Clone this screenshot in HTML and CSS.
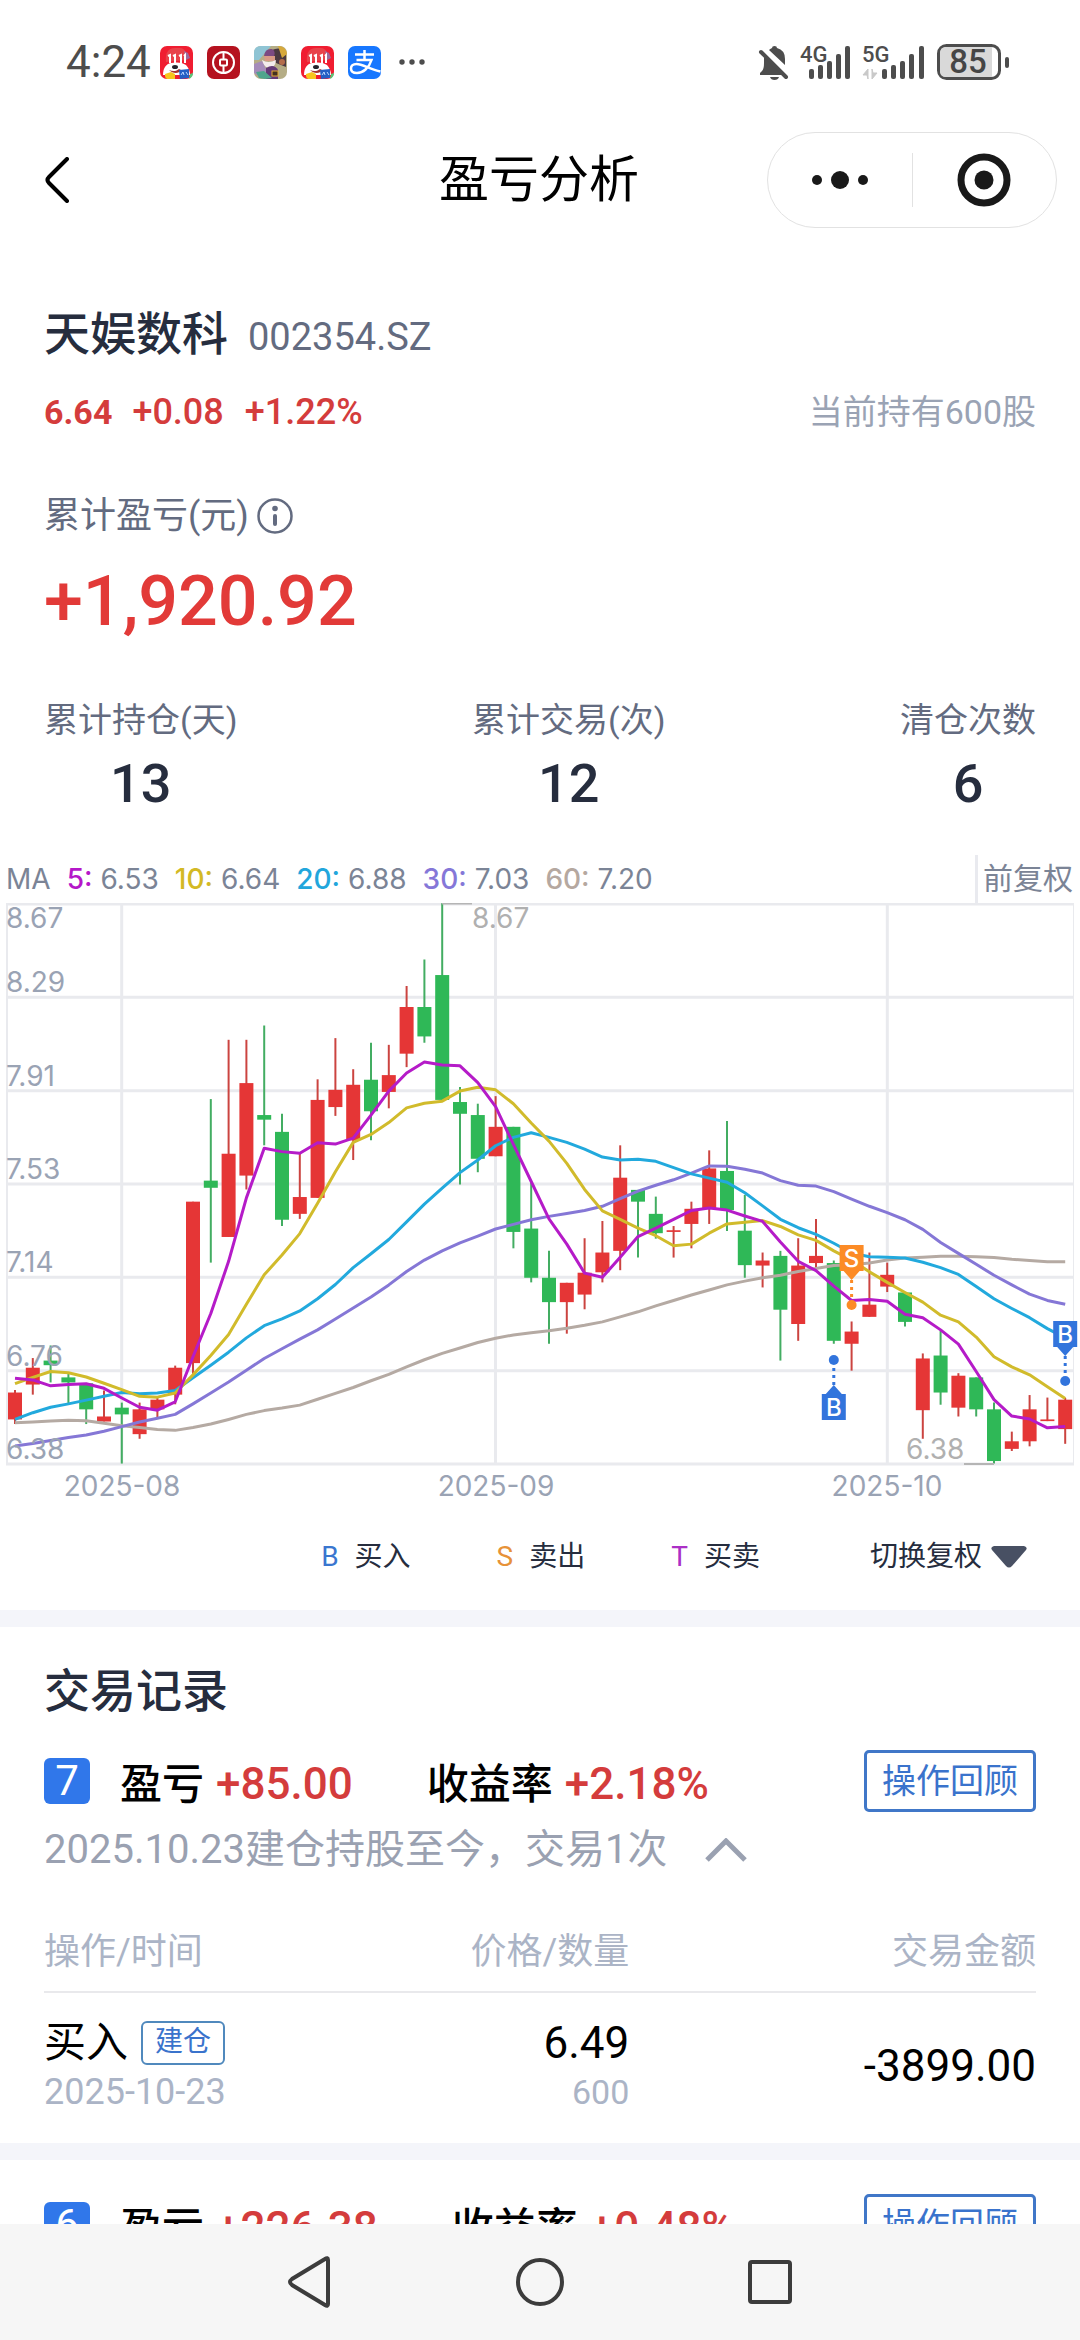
FILE: index.html
```html
<!DOCTYPE html>
<html lang="zh-CN">
<head>
<meta charset="utf-8">
<meta name="viewport" content="width=device-width, initial-scale=1">
<title>盈亏分析</title>
<link rel="stylesheet" href="styles.css">
</head>
<body>
<svg class="defs" aria-hidden="true">
  <symbol id="sale-app" viewBox="0 0 33 33">
    <rect width="33" height="33" rx="7" fill="#f01d31"/>
    <path d="M6 16C5 7 8 2 15 2h5c5 0 7 5 7 12z" fill="#e8434b"/>
    <path d="M24 5l4 2 2 5-4 2z" fill="#9c6a9c"/>
    <path d="M8 10l2-1v8M13 10l2-1v8M19 10l2-1v8M24 10l1-1v8" stroke="#fff" stroke-width="2" fill="none"/>
    <path d="M3 29c0-7 3-11 8-12 5-1 11-1 15 2 3 3 4 7 4 10z" fill="#fff"/>
    <path d="M9 24c4 2 8 1 10-1l2 1c-2 4-8 4-12 0z" fill="#a8322d"/>
    <ellipse cx="15" cy="21" rx="3" ry="2" fill="#26242d"/>
    <path d="M5 28l6-2 4 2v5H7q-2-1-2-3z" fill="#f8c51c"/>
    <path d="M19 24l10-1v9l-9 1z" fill="#245fc4"/>
    <path d="M21 29l2-3 1 3m2-3l2 3" stroke="#bcd9ff" fill="none"/>
    <path d="M30 28l3-1q0 4-4 6z" fill="#58c678"/>
  </symbol>
</svg>
<div class="app">
  <div class="status">
    <div class="status-side">
      <span class="clock">4:24</span>
      <div class="app-icons">
        <svg class="app-icon" viewBox="0 0 33 33"><use href="#sale-app"/></svg>
        <svg class="app-icon" viewBox="0 0 33 33"><rect width="33" height="33" rx="7" fill="#b5121f"/><circle cx="16.500" cy="16.500" r="10.500" fill="none" stroke="#fff" stroke-width="2"/><rect x="13" y="13.500" width="7" height="6" rx="1" fill="none" stroke="#fff" stroke-width="2"/><path d="M16.500 6v7M16.500 20v7" stroke="#fff" stroke-width="2"/></svg>
        <svg class="app-icon" viewBox="0 0 33 33"><rect width="33" height="33" rx="7" fill="#b5ad86"/><path d="M0 7q0-7 7-7h10L5 14H0z" fill="#8fc4d4"/><path d="M18 4q8-4 14 2v15l-10-4z" fill="#4b3940"/><path d="M24 0q8 0 9 8l-5 4z" fill="#d6a93c"/><path d="M10 10q1-8 8-7 4 2 2 8z" fill="#7c4a82"/><path d="M10 10h11v5H11z" fill="#d99a86"/><path d="M8 14q6 4 14 0-1 9-8 8-5-2-6-8z" fill="#f3ecec"/><path d="M0 18l8-3 5 10-7 6-6-4z" fill="#a58cba"/><path d="M12 22q8-5 12 2v9H12z" fill="#643a76"/><path d="M2 26l8-1 8 7-7 1-6-1z" fill="#4fa58d"/><rect x="18" y="25" width="6" height="5" fill="#44301f" stroke="#e5aa33"/><circle cx="28" cy="16" r="3" fill="#b46d4b"/></svg>
        <svg class="app-icon" viewBox="0 0 33 33"><use href="#sale-app"/></svg>
        <svg class="app-icon" viewBox="0 0 33 33"><rect width="33" height="33" rx="7" fill="#1777ff"/><path d="M7 8.500h19M16.500 4v10M8.500 14h15C21 22 15 27 9 27c-4 0-6-2-6-4.500 0-2.500 2-4.500 5.500-4.500 6 0 13 5 24 7.500" fill="none" stroke="#fff" stroke-width="2.500"/></svg>
      </div>
      <svg class="more" viewBox="0 0 26 6"><circle cx="3" cy="3" r="2.700"/><circle cx="13" cy="3" r="2.700"/><circle cx="23" cy="3" r="2.700"/></svg>
    </div>
    <svg class="status-icons" viewBox="0 0 252 36">
      <g fill="#4d4d4d">
        <path d="M11 6q1-1 3-2 0-2 2.500-2T19 4q8 2 8 11v6z"/>
        <path d="M6 12l19 19H2v-2l2-2q2-2 2-8z"/>
        <path d="M3 8l25 25" stroke="#4d4d4d" stroke-width="4" stroke-linecap="round"/>
        <path d="M12 33h9q-1 3-4.500 3T12 33z"/>
        <rect x="51" y="25" width="5" height="10" rx="2"/><rect x="60" y="21" width="5" height="14" rx="2"/><rect x="69" y="17" width="5" height="18" rx="2"/><rect x="78" y="10" width="5" height="25" rx="2"/><rect x="87" y="2" width="5" height="33" rx="2"/>
        <rect x="124" y="25" width="5" height="10" rx="2"/><rect x="133" y="21" width="5" height="14" rx="2"/><rect x="142" y="17" width="5" height="18" rx="2"/><rect x="151" y="10" width="5" height="25" rx="2"/><rect x="161" y="2" width="5" height="33" rx="2"/>
        <rect x="247" y="13" width="4" height="11" rx="2"/>
      </g>
      <path d="M110 35V25l-5 6h4zM114 25v10l5-6h-4z" fill="#c9c9c9" stroke="#c9c9c9"/>
      <text x="42" y="18" class="net">4G</text><text x="104" y="18" class="net">5G</text>
      <rect x="180.500" y="1.500" width="61" height="33" rx="8" fill="#fff" stroke="#4d4d4d" stroke-width="3"/>
      <path d="M188 3h46v30h-46q-6 0-6-6V9q0-6 6-6z" fill="#d9d9d9"/>
      <text x="210" y="29" class="battery">85</text>
    </svg>
  </div>
  <header class="bar">
    <button class="back" aria-label="返回"><svg viewBox="0 0 24 46"><path d="M22 2L4 20q-3 3 0 6l18 18"/></svg></button>
    <h1>盈亏分析</h1>
    <div class="capsule">
      <button aria-label="更多"><svg viewBox="0 0 56 56"><circle cx="5" cy="28" r="5"/><circle cx="28" cy="28" r="9"/><circle cx="51" cy="28" r="5"/></svg></button>
      <button aria-label="关闭"><svg viewBox="0 0 56 56"><circle cx="28" cy="28" r="23" fill="none" stroke="#191919" stroke-width="7"/><circle cx="28" cy="28" r="9.500"/></svg></button>
    </div>
  </header>
  <main>
    <section class="summary">
      <div class="stock"><h2>天娱数科</h2><span class="code">002354.SZ</span></div>
      <div class="quote">
        <span class="price">6.64</span><span class="change">+0.08</span><span class="rate">+1.22%</span>
        <span class="holding">当前持有600股</span>
      </div>
      <div class="total-label">累计盈亏(元)<button class="info" aria-label="说明"><svg viewBox="0 0 36 36"><circle cx="18" cy="18" r="16.500" fill="none" stroke="#636b80" stroke-width="2.500"/><circle cx="18" cy="10.500" r="2.800"/><rect x="16" y="16" width="4" height="12" rx="2"/></svg></button></div>
      <div class="total">+1,920.92</div>
      <dl class="stats">
        <div><dt>累计持仓(天)</dt><dd>13</dd></div>
        <div><dt>累计交易(次)</dt><dd>12</dd></div>
        <div><dt>清仓次数</dt><dd>6</dd></div>
      </dl>
    </section>
    <section class="chart">
      <div class="ma">
        <span>MA</span>
        <span class="ma-item"><b class="ma5">5:</b>6.53</span>
        <span class="ma-item"><b class="ma10">10:</b>6.64</span>
        <span class="ma-item"><b class="ma20">20:</b>6.88</span>
        <span class="ma-item"><b class="ma30">30:</b>7.03</span>
        <span class="ma-item"><b class="ma60">60:</b>7.20</span>
        <span class="adjust">前复权</span>
      </div>
      <svg id="kline" class="kline" viewBox="0 0 1080 600" role="img" aria-label="K线图"></svg>
      <div class="legend">
        <span><i class="buy">B</i>买入</span>
        <span><i class="sell">S</i>卖出</span>
        <span><i class="both">T</i>买卖</span>
        <button class="switch">切换复权<svg viewBox="0 0 36 22"><path d="M3 0h30q4 1 2 4L21 20q-3 3-6 0L1 4Q-1 1 3 0z"/></svg></button>
      </div>
    </section>
    <section class="records">
      <h2>交易记录</h2>
      <div class="record">
        <div class="record-head">
          <span class="num">7</span>
          <span class="pair">盈亏<em>+85.00</em></span>
          <span class="pair">收益率<em>+2.18%</em></span>
          <button class="review">操作回顾</button>
        </div>
        <div class="note">2025.10.23建仓持股至今，交易1次<button class="fold" aria-label="收起"><svg viewBox="0 0 42 24"><path d="M2 22L21 3l19 19"/></svg></button></div>
        <table>
          <colgroup><col class="c1"><col class="c2"><col></colgroup>
          <thead><tr><th>操作/时间</th><th>价格/数量</th><th>交易金额</th></tr></thead>
          <tbody><tr>
            <td><div class="main-line">买入<span class="tag">建仓</span></div><div class="sub-line date">2025-10-23</div></td>
            <td><div class="main-line fig">6.49</div><div class="sub-line">600</div></td>
            <td class="fig">-3899.00</td>
          </tr></tbody>
        </table>
      </div>
    </section>
    <section class="records">
      <div class="record">
        <div class="record-head">
          <span class="num">6</span>
          <span class="pair">盈亏<em>+226.38</em></span>
          <span class="pair">收益率<em>+0.48%</em></span>
          <button class="review">操作回顾</button>
        </div>
      </div>
    </section>
  </main>
  <nav class="system">
    <button aria-label="返回"><svg viewBox="0 0 48 52"><path d="M42 4v44q0 3-3 1L6 29q-4-3 0-6L39 3q3-2 3 1z"/></svg></button>
    <button aria-label="主页"><svg viewBox="0 0 48 52"><circle cx="24" cy="26" r="22"/></svg></button>
    <button aria-label="最近任务"><svg viewBox="0 0 48 52"><rect x="4" y="6" width="40" height="40" rx="2"/></svg></button>
  </nav>
</div>
<script src="chart.js"></script>
</body>
</html>
```
FILE: styles.css
```css
* { box-sizing: border-box; margin: 0; padding: 0; }
body { background: #fff; color: #262d3e; font-family: Roboto, "Noto Sans CJK SC", sans-serif; }
button { font: inherit; color: inherit; background: none; border: 0; cursor: pointer; }
svg { display: block; }
em, i { font-style: normal; }
.defs { display: none; }
.app { height: 100vh; display: flex; flex-direction: column; overflow: hidden; }

.status { display: flex; flex-shrink: 0; justify-content: space-between; align-items: center; height: 100px; padding: 24px 70px 0 66px; }
.status-side { display: flex; align-items: center; }
.clock { font-size: 44px; line-height: 48px; color: #4d4d4d; width: 94px; }
.app-icons { display: flex; gap: 14px; }
.app-icon { width: 33px; height: 33px; }
.more { width: 26px; margin-left: 18px; fill: #4d4d4d; }
.status-icons { width: 252px; height: 36px; overflow: visible; }
.net { font: 500 22px Roboto, sans-serif; fill: #4d4d4d; }
.battery { font: 500 33px Roboto, sans-serif; fill: #454545; text-anchor: middle; }

.bar { display: grid; grid-template-columns: 394px 1fr auto; flex-shrink: 0; align-items: center; height: 160px; padding: 0 23px 0 45px; color: #000; }
.bar h1 { font-size: 50px; line-height: 60px; font-weight: 400; }
.back { justify-self: start; }
.back svg { width: 24px; height: 46px; fill: none; stroke: #000; stroke-width: 4; stroke-linecap: round; }
.capsule { display: flex; width: 290px; height: 96px; padding: 20px 0; border: 1px solid #e2e2e2; border-radius: 48px; }
.capsule button { flex: 1; display: flex; align-items: center; justify-content: center; }
.capsule button + button { border-left: 1px solid #e2e2e2; }
.capsule svg { width: 56px; fill: #191919; }

main { flex: 1; overflow-y: auto; scrollbar-width: none; }
.summary { padding: 42px 44px 41px; }
.stock { display: flex; align-items: baseline; gap: 20px; line-height: 64px; }
h2 { font-size: 46px; font-weight: 500; }
.code { font-size: 38px; color: #636b80; }
.quote { display: flex; align-items: center; margin-top: 21px; font-size: 36px; line-height: 44px; font-weight: 500; color: #d43c3c; }
.price { font-size: 34px; font-weight: 700; }
.change { margin-left: 20px; }
.rate { margin-left: 21px; }
.holding { margin-left: auto; font-size: 34px; font-weight: 400; color: #9aa3b4; }
.total-label { display: flex; align-items: center; gap: 8px; margin-top: 60px; font-size: 36px; line-height: 44px; color: #636b80; }
.info svg { width: 36px; fill: #636b80; }
.total { margin-top: 21px; font-size: 70px; line-height: 84px; font-weight: 500; color: #e23a38; }
.stats { display: flex; justify-content: space-between; margin-top: 55px; text-align: center; }
.stats dt { font-size: 34px; line-height: 44px; color: #636b80; }
.stats dd { margin-top: 12px; font-size: 54px; line-height: 60px; font-weight: 500; }

.ma { display: flex; align-items: center; height: 48px; padding: 0 7px 0 6px; font-family: Inter, "Noto Sans CJK SC", sans-serif; font-size: 28px; color: #7b8496; gap: 16px; }
.ma-item { display: flex; gap: 8px; }
.ma-item b { font-weight: 500; }
.ma5 { color: #b517c9; }
.ma10 { color: #d3b925; }
.ma20 { color: #22a6dc; }
.ma30 { color: #8577d8; }
.ma60 { color: #b5a8a0; }
.adjust { align-self: stretch; margin-left: auto; padding-left: 5px; border-left: 3px solid #e9eaef; font-size: 30px; line-height: 46px; }
.kline { width: 100%; height: auto; }
.kline text { font: 28px Inter, sans-serif; fill: #9aa3b4; }
.kline .extreme { fill: #b0b0b0; }
.kline .mark { font: 500 24px Inter, sans-serif; fill: #fff; text-anchor: middle; }
.kline .month { text-anchor: middle; }
.legend { display: flex; justify-content: flex-end; align-items: center; height: 107px; padding-right: 53px; font-size: 28px; line-height: 40px; }
.legend span { margin-right: 86px; }
.legend i { margin-right: 16px; }
.legend span:nth-child(3) { margin-right: 110px; }
.buy { color: #3a76cf; }
.sell { color: #e79238; }
.both { color: #ab2fc6; }
.switch { display: flex; align-items: center; gap: 9px; }
.switch svg { width: 36px; fill: #485063; }

.records { border-top: 17px solid #f4f5fa; padding: 34px 44px 0; }
.records h2 { line-height: 60px; margin-bottom: 29px; }
.record-head { display: flex; align-items: center; height: 62px; color: #000; }
.num { width: 46px; height: 46px; margin-right: 30px; border-radius: 6px; background: #3077ea; color: #fff; font-size: 42px; line-height: 46px; text-align: center; }
.pair { display: flex; align-items: baseline; gap: 12px; padding-bottom: 2px; margin-right: 74px; font-size: 42px; font-weight: 500; }
.pair em { font-size: 44px; color: #d43c3c; }
.review { margin-left: auto; width: 172px; height: 62px; border: 3px solid #4077c8; border-radius: 5px; font-size: 34px; line-height: 50px; color: #3a73cc; }
.note { display: flex; align-items: center; gap: 38px; margin-top: 14px; font-size: 40px; line-height: 48px; color: #9aa1b1; }
.fold svg { width: 42px; fill: none; stroke: #9aa1b1; stroke-width: 5; }
table { width: 100%; margin-top: 56px; border-collapse: collapse; table-layout: fixed; text-align: right; }
.c1 { width: 28%; }
.c2 { width: 31%; }
th { padding-bottom: 17px; border-bottom: 2px solid #e9e9ec; font-size: 36px; line-height: 44px; font-weight: 400; color: #abb4c6; }
th:first-child, td:first-child { text-align: left; }
td { padding: 26px 0 31px; font-size: 42px; line-height: 48px; color: #000; }
.fig { font-size: 44px; }
.main-line { display: flex; align-items: center; gap: 13px; height: 48px; }
.main-line.fig { justify-content: flex-end; }
.tag { height: 44px; padding: 0 12px; border: 2px solid #5089bd; border-radius: 6px; font-size: 28px; line-height: 38px; color: #3a73cc; }
.sub-line { margin-top: 5px; font-size: 34px; line-height: 40px; color: #abb4c6; }
.date { font-size: 36px; }

.system { flex-shrink: 0; display: flex; justify-content: center; align-items: center; gap: 182px; height: 116px; background: #f6f6f6; }
.system svg { width: 48px; height: 52px; fill: none; stroke: #3c3c3c; stroke-width: 4; }
```
FILE: chart.js
```js
// Levels run downward from the top of the price scale to its foot.
const SCALE_TOP = 128, SCALE_FOOT = 1460;
const TOP = 1, HEIGHT = 560, FIRST_X = 15, STEP = 17.8, BODY = 14;

const colours = { r: '#e53636', g: '#2fb857' };

// [direction, high, body top, body foot, low]
const candles = [
  ['r',1284,1290,1354,1365],['r',1208,1231,1271,1295],['g',1178,1214,1225,1266],['g',1246,1254,1266,1317],
  ['g',1268,1268,1330,1365],['r',1285,1347,1359,1359],['g',1314,1326,1342,1459],['r',1314,1330,1389,1400],
  ['r',1303,1307,1330,1350],['r',1226,1231,1295,1318],['r',836,836,1220,1254],['g',592,786,803,981],
  ['r',451,722,920,920],['r',451,554,774,807],['g',417,630,641,702],['g',627,670,879,894],
  ['r',722,825,865,877],['r',545,594,827,827],['r',447,570,611,632],['r',521,558,690,737],
  ['g',458,546,621,690],['r',463,535,575,614],['r',323,373,484,516],['g',260,373,443,458],
  ['g',126,297,594,594],['g',563,599,627,795],['g',603,630,734,766],['r',585,658,728,728],
  ['g',658,658,908,947],['g',790,900,1017,1028],['g',953,1017,1075,1174],['r',1029,1029,1075,1150],
  ['r',923,1005,1057,1092],['r',882,957,1004,1028],['r',702,779,953,999],['g',808,808,836,969],
  ['g',824,865,911,924],['r',894,904,908,969],['r',836,853,889,947],['r',714,757,853,889],
  ['g',644,763,856,906],['g',820,905,987,1017],['r',957,976,988,1040],['g',953,965,1093,1214],
  ['r',923,988,1127,1167],['r',877,965,982,1000],['g',976,982,1167,1174],['r',1121,1145,1174,1238],
  ['r',957,1081,1110,1110],['r',981,1010,1038,1051],['g',1052,1052,1122,1133],['r',1197,1209,1332,1400],
  ['g',1143,1202,1290,1319],['r',1244,1250,1326,1347],['g',1254,1254,1330,1347],['g',1314,1330,1453,1459],
  ['r',1383,1406,1424,1429],['r',1296,1330,1406,1418],['r',1302,1354,1358,1358],['r',1303,1307,1377,1412]
];

const averages = [
  ['#b51bc8', [1256,1260,1274,1271,1269,1280,1303,1325,1332,1312,1205,1102,978,827,709,717,721,696,699,685,630,573,530,504,511,513,553,610,700,788,877,937,1006,1016,968,919,899,878,857,851,856,870,883,932,978,1000,1037,1071,1069,1073,1104,1112,1141,1175,1240,1307,1346,1353,1374,1371]],
  ['#d1bb2b', [1269,1254,1240,1243,1253,1268,1283,1299,1301,1291,1248,1202,1152,1080,1010,963,912,840,765,695,676,648,613,602,597,573,564,570,603,649,692,745,807,858,878,899,917,941,937,911,889,885,881,895,915,928,953,975,1003,1028,1052,1075,1106,1122,1158,1205,1229,1248,1276,1304]],
  ['#22a9dd', [1354,1338,1325,1317,1308,1299,1290,1293,1291,1285,1255,1225,1194,1160,1131,1115,1096,1067,1033,993,960,926,884,842,804,767,737,703,683,672,683,695,711,730,737,735,740,755,770,780,790,815,846,878,898,914,935,958,967,968,970,980,993,1009,1038,1067,1090,1112,1138,1160]],
  ['#8577d6', [1417,1411,1404,1397,1391,1382,1371,1360,1351,1342,1317,1291,1265,1237,1209,1186,1163,1141,1115,1089,1063,1034,1002,975,953,934,918,901,890,879,871,864,857,847,829,811,797,784,768,751,752,759,768,786,797,799,812,830,847,862,879,902,933,959,985,1011,1034,1056,1071,1080]],
  ['#b5aaa3', [1362,1360,1358,1356,1357,1363,1369,1373,1378,1380,1373,1365,1354,1342,1333,1327,1320,1306,1292,1278,1262,1247,1229,1212,1197,1184,1171,1161,1153,1148,1143,1137,1130,1122,1110,1098,1084,1071,1058,1046,1034,1025,1017,1011,1002,995,988,986,982,975,970,968,966,966,967,969,973,976,979,979]]
];

const x = i => FIRST_X + i * STEP;
const y = v => TOP + (v - SCALE_TOP) * HEIGHT / (SCALE_FOOT - SCALE_TOP);
const line = (x1, y1, x2, y2, colour, width, extra = '') =>
  `<line x1="${x1}" y1="${y1}" x2="${x2}" y2="${y2}" stroke="${colour}" stroke-width="${width}" ${extra}/>`;

let out = '';
const grid = '#e9eaee';
for (let k = 0; k < 7; k++) {
  const gy = TOP + k * HEIGHT / 6;
  out += line(6, gy, 1074, gy, grid, 3);
}
[[7, 2], [121.7, 3], [495.5, 3], [887.3, 3], [1073.5, 1]].forEach(([gx, w]) => {
  out += line(gx, TOP, gx, TOP + HEIGHT, grid, w);
});

candles.forEach(([c, high, top, foot, low], i) => {
  const colour = colours[c];
  out += line(x(i), y(high), x(i), y(low), c === 'r' ? '#cb4440' : '#43ad62', 2);
  out += `<rect x="${x(i) - BODY / 2}" y="${y(top)}" width="${BODY}" height="${y(foot) - y(top)}" fill="${colour}"/>`;
});
averages.slice().reverse().forEach(([colour, levels]) => {
  out += `<polyline points="${levels.map((v, i) => x(i) + ',' + y(v)).join(' ')}" fill="none" stroke="${colour}" stroke-width="3" stroke-linejoin="round"/>`;
});

['8.67', '8.29', '7.91', '7.53', '7.14', '6.76', '6.38'].forEach((label, k) => {
  out += `<text x="6" y="${k ? TOP + k * HEIGHT / 6 - 5 : 25}">${label}</text>`;
});
[['2025-08', 122], ['2025-09', 496], ['2025-10', 887]].forEach(([label, mx]) => {
  out += `<text class="month" x="${mx}" y="593">${label}</text>`;
});
out += line(442, 0.5, 472, 0.5, '#b5b5b5', 2) + '<text class="extreme" x="472" y="25">8.67</text>';
out += line(964, 561, 994, 561, '#b5b5b5', 2) + '<text class="extreme" x="906" y="556">6.38</text>';

// Trade flags: side is 1 when the flag stands above its dot, -1 when below.
function flag(letter, cx, dot, side, colour) {
  const tip = dot - side * 25, neck = tip - side * 9, end = neck - side * 26;
  out += line(cx, tip, cx, dot - side * 8, colour, 3, 'stroke-dasharray="3 4"');
  out += `<circle cx="${cx}" cy="${dot}" r="5" fill="${colour}"/>`;
  out += `<path d="M${cx - 12} ${end}h24V${neck}h-4L${cx} ${tip}L${cx - 8} ${neck}h-4z" fill="${colour}"/>`;
  out += `<text class="mark" x="${cx}" y="${(neck + end) / 2 + 9}">${letter}</text>`;
}
flag('B', x(46), 457, -1, '#3274dc');
flag('S', x(47), 402, 1, '#fc8b26');
flag('B', x(59), 478, 1, '#3274dc');

document.getElementById('kline').innerHTML = out;
```
